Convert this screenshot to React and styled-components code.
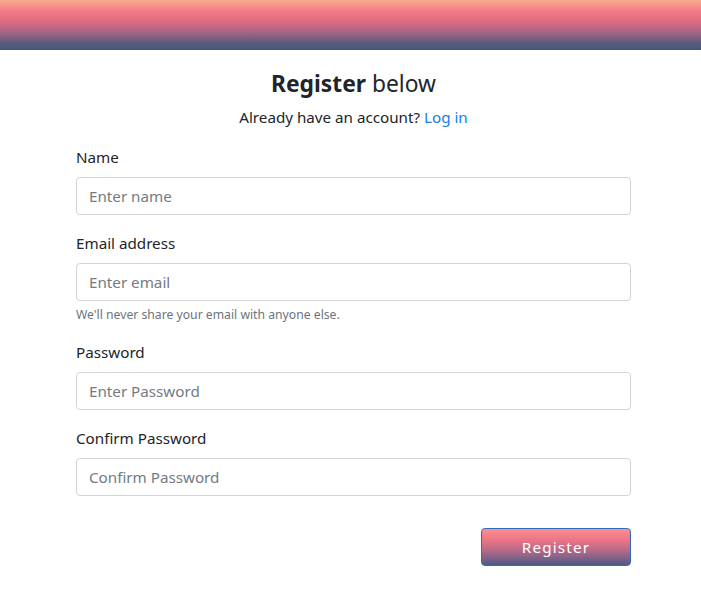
import React from 'react';
import styled, { createGlobalStyle } from 'styled-components';

const GlobalStyle = createGlobalStyle`
  body {
    margin: 0;
    background: #fff;
    font-family: "Noto Sans", "Open Sans", sans-serif;
    color: #212529;
  }
  * { box-sizing: border-box; }
`;

const Header = styled.div`
  height: 50px;
  background: linear-gradient(to bottom, #f9ab90 0%, #f47a87 22%, #d96a82 45%, #9a6484 68%, #5b5a7c 86%, #405a7a 100%);
`;

const Container = styled.div`
  width: 555px;
  margin-left: 76px;
  padding-top: 20px;
`;

const Title = styled.h2`
  margin: 0 0 6px;
  text-align: center;
  font-size: 22.8px;
  line-height: 28.8px;
  font-weight: 400;

  strong { font-weight: 700; }
`;

const Subtitle = styled.p`
  margin: 0 0 16px;
  text-align: center;
  font-size: 15.2px;
  line-height: 24px;

  a { color: #1a7ee6; text-decoration: none; }
`;

const Group = styled.div`
  margin-bottom: 16px;
`;

const Label = styled.label`
  display: block;
  font-size: 15.2px;
  line-height: 24px;
  margin-bottom: 8px;
`;

const Input = styled.input`
  display: block;
  width: 100%;
  height: 38px;
  padding: 6px 12px;
  font: inherit;
  font-size: 15.2px;
  line-height: 24px;
  color: #495057;
  border: 1px solid #ced4da;
  border-radius: 4px;
  outline: none;

  &::placeholder { color: #737b83; }
`;

const Help = styled.small`
  display: block;
  margin-top: 4px;
  font-size: 12.2px;
  line-height: 19px;
  color: #6c757d;
`;

const Actions = styled.div`
  display: flex;
  justify-content: flex-end;
  padding-top: 16px;
`;

const Button = styled.button`
  width: 150px;
  height: 38px;
  font: inherit;
  font-size: 15.2px;
  letter-spacing: 1.2px;
  color: #fff;
  border: 1px solid #2e6bbd;
  border-radius: 4px;
  background: linear-gradient(to bottom, #fc8f90 0%, #ee7485 30%, #a96887 65%, #4d5a89 100%);
  cursor: pointer;
`;

const fields = [
  { label: 'Name', type: 'text', placeholder: 'Enter name' },
  { label: 'Email address', type: 'email', placeholder: 'Enter email', help: "We'll never share your email with anyone else." },
  { label: 'Password', type: 'password', placeholder: 'Enter Password' },
  { label: 'Confirm Password', type: 'password', placeholder: 'Confirm Password' },
];

const App = () => (
  <>
    <GlobalStyle />
    <Header />
    <Container>
      <Title><strong>Register</strong> below</Title>
      <Subtitle>Already have an account? <a href="#login">Log in</a></Subtitle>
      <form onSubmit={(e) => e.preventDefault()}>
        {fields.map((f) => (
          <Group key={f.label}>
            <Label>{f.label}</Label>
            <Input type={f.type} placeholder={f.placeholder} />
            {f.help && <Help>{f.help}</Help>}
          </Group>
        ))}
        <Actions>
          <Button type="submit">Register</Button>
        </Actions>
      </form>
    </Container>
  </>
);

export default App;
